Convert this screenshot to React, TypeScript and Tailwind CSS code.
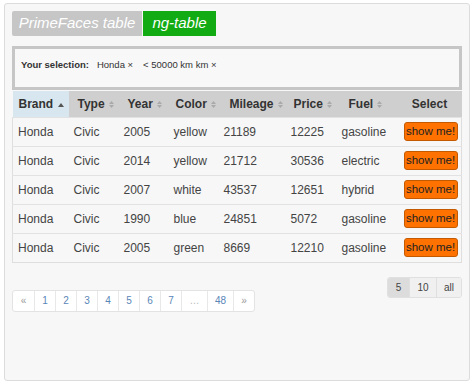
const rows = [
  ["Honda", "Civic", "2005", "yellow", "21189", "12225", "gasoline"],
  ["Honda", "Civic", "2014", "yellow", "21712", "30536", "electric"],
  ["Honda", "Civic", "2007", "white", "43537", "12651", "hybrid"],
  ["Honda", "Civic", "1990", "blue", "24851", "5072", "gasoline"],
  ["Honda", "Civic", "2005", "green", "8669", "12210", "gasoline"],
];

const cols = [
  { label: "Brand", w: "w-[56px]", pl: "pl-[6px]", sorted: true },
  { label: "Type", w: "w-[50px]", pl: "pl-[9px]" },
  { label: "Year", w: "w-[50px]", pl: "pl-[9px]" },
  { label: "Color", w: "w-[50px]", pl: "pl-[7px]" },
  { label: "Mileage", w: "w-[67px]", pl: "pl-[11px]" },
  { label: "Price", w: "w-[51px]", pl: "pl-[8px]" },
  { label: "Fuel", w: "w-[61px]", pl: "pl-[12px]" },
];

const pages = ["«", "1", "2", "3", "4", "5", "6", "7", "…", "48", "»"];

function SortIcon({ up }: { up?: boolean }) {
  if (up)
    return (
      <svg className="ml-[5px] inline-block align-middle" width="6" height="4" viewBox="0 0 6 4">
        <path d="M0 4 L3 0 L6 4 Z" fill="#555" />
      </svg>
    );
  return (
    <svg className="ml-[4px] inline-block align-middle" width="5" height="7" viewBox="0 0 5 7">
      <path d="M0 3 L2.5 0 L5 3 Z M0 4 L2.5 7 L5 4 Z" fill="#aaa" />
    </svg>
  );
}

export default function App() {
  return (
    <div className="h-[385px] w-[474px] bg-white p-[3px_4px_4px_4px] font-['Liberation_Sans',Arial,sans-serif]">
      <div className="h-[378px] rounded-[3px] border border-[#dcdcdc] bg-[#f7f7f7] px-[7px] pt-[7px]">
        <div className="flex">
          <div className="flex h-[25px] w-[130px] items-center justify-center rounded-l-[2px] bg-[#c6c6c6] text-[15px] italic text-white">
            PrimeFaces table
          </div>
          <div className="ml-px flex h-[25px] w-[73px] items-center justify-center bg-[#13ab13] text-[15px] italic text-white">
            ng-table
          </div>
        </div>

        <div className="mt-[10px] h-[44px] w-[450px] border-[3px] border-[#c6c6c6] bg-[#f8f8f8] px-[6px] pt-[9px] text-[9.5px] text-[#333]">
          <span className="font-bold">Your selection:</span>
          <span className="ml-[8px]">Honda ×</span>
          <span className="ml-[10px]">&lt; 50000 km km ×</span>
        </div>

        <table className="mt-px w-[450px] table-fixed border-collapse text-[12px] text-[#444]">
          <thead>
            <tr className="h-[26px] bg-[#cfcfcf] text-left font-bold text-[#333]">
              {cols.map((c) => (
                <th key={c.label} className={`${c.w} ${c.pl} whitespace-nowrap ${c.sorted ? "bg-[#d8e6ef]" : ""}`}>
                  {c.label}
                  <SortIcon up={c.sorted} />
                </th>
              ))}
              <th className="text-center">Select</th>
            </tr>
          </thead>
          <tbody className="border-x border-b border-[#dedede]">
            {rows.map((r, i) => (
              <tr key={i} className="h-[29px] border-t border-[#e2e2e2]">
                {r.map((v, j) => (
                  <td key={j} className="pl-[5px]">
                    {v}
                  </td>
                ))}
                <td className="pl-[6px]">
                  <button className="h-[19px] w-[54px] whitespace-nowrap rounded-[3px] border border-[#c45a00] bg-[#ff7200] p-0 text-[11.5px] leading-none text-[#222]">
                    show me!
                  </button>
                </td>
              </tr>
            ))}
          </tbody>
        </table>

        <div className="mt-[14px] flex justify-end">
          <div className="flex h-[21px] overflow-hidden rounded-[3px] border border-[#e0e0e0] text-[10px] text-[#444]">
            <div className="flex w-[21px] items-center justify-center bg-[#dcdcdc]">5</div>
            <div className="flex w-[27px] items-center justify-center border-l border-[#e0e0e0] bg-[#f0f0f0]">10</div>
            <div className="flex w-[25px] items-center justify-center border-l border-[#e0e0e0] bg-[#f0f0f0]">all</div>
          </div>
        </div>

        <div className="-mt-[8px] flex">
          <div className="flex h-[22px] rounded-[3px] border border-[#e3e3e3] bg-white text-[10px] text-[#5a86b8]">
            {pages.map((p, i) => (
              <div
                key={i}
                className={`flex items-center justify-center ${i > 0 ? "border-l border-[#e8e8e8]" : ""} ${
                  p === "…" ? "w-[26px] text-[#bbb]" : p === "48" ? "w-[26px]" : "w-[21px]"
                } ${p === "«" || p === "»" ? "text-[#999]" : ""}`}
              >
                {p}
              </div>
            ))}
          </div>
        </div>
      </div>
    </div>
  );
}
